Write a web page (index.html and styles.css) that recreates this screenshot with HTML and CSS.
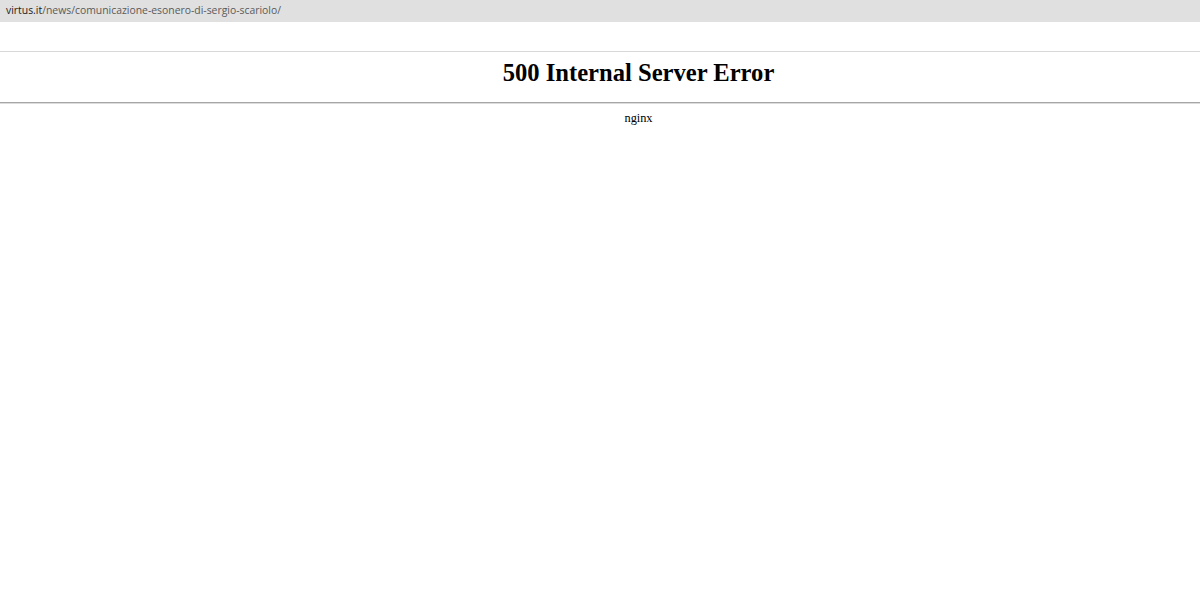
FILE: index.html
```html
<!DOCTYPE html>
<html lang="en">
<head>
    <meta charset="UTF-8">
    <meta name="viewport" content="width=device-width, initial-scale=1.0">
    <title>500 Internal Server Error</title>
    <link rel="stylesheet" href="styles.css">
</head>
<body>
    <div class="address-bar">
        <span class="host">virtus.it</span><span class="path">/news/comunicazione-esonero-di-sergio-scariolo/</span>
    </div>
    <div class="page">
        <div class="error-title">
            <h1>500 Internal Server Error</h1>
        </div>
        <p class="server">nginx</p>
    </div>
</body>
</html>
```

FILE: styles.css
```css
body {
    margin: 0;
    padding: 0;
    background-color: #ffffff;
    font-family: "Liberation Serif", "Times New Roman", serif;
    color: #000;
    overflow: hidden;
}

.address-bar {
    height: 22px;
    line-height: 21px;
    padding-left: 6px;
    background-color: #e0e0e0;
    font-family: "Open Sans", "Noto Sans", sans-serif;
    font-size: 10.4px;
    white-space: nowrap;
}

.address-bar .host {
    color: #202020;
}

.address-bar .path {
    color: #5a5a5a;
}

.page {
    margin-top: 29px;
    border-top: 1px solid #d8d8d8;
}

.error-title {
    padding-left: 77px;
    height: 50px;
    border-bottom: 1px solid #a6a6a6;
    box-shadow: 0 1px 0 #dcdcdc;
}

.error-title h1 {
    margin: 0;
    padding-top: 7px;
    text-align: center;
    font-size: 24.6px;
    font-weight: bold;
    line-height: 28px;
}

.server {
    margin: 0;
    padding-top: 8px;
    padding-left: 77px;
    text-align: center;
    font-size: 12.3px;
    line-height: 14px;
}
```
